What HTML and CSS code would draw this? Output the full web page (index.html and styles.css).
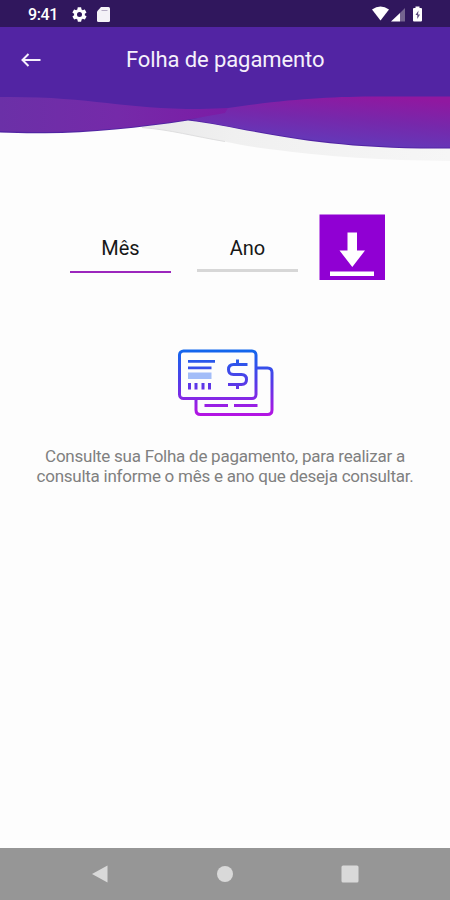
FILE: index.html
```html
<!DOCTYPE html>
<html lang="pt-BR">
<head>
<meta charset="utf-8">
<title>Folha de pagamento</title>
<link rel="stylesheet" href="styles.css">
</head>
<body>
<div class="screen">
  <div class="status">
    <span class="time">9:41</span>
    <svg class="gear" viewBox="1.500 1.500 21 21"><path fill="#fff" d="M19.400 13c0-.3.1-.6.1-1s0-.7-.1-1l2.100-1.600c.2-.2.3-.4.1-.7l-2-3.400c-.1-.2-.4-.3-.6-.2l-2.500 1c-.5-.4-1.100-.7-1.700-1L14.400 2.400c0-.2-.2-.4-.5-.4h-4c-.2 0-.4.200-.5.400L9 5.100c-.6.200-1.200.600-1.700 1l-2.500-1c-.2-.1-.5 0-.6.200l-2 3.400c-.1.200-.1.500.1.700L4.500 11c0 .3-.1.700-.1 1s0 .7.100 1l-2.100 1.600c-.2.200-.3.400-.1.700l2 3.400c.1.200.4.300.6.200l2.500-1c.5.400 1.100.7 1.700 1l.4 2.700c0 .2.200.4.5.4h4c.2 0 .4-.2.500-.4l.4-2.700c.6-.2 1.200-.6 1.700-1l2.500 1c.2.100.5 0 .6-.2l2-3.400c.1-.2.100-.5-.1-.7zM12 15.500a3.500 3.500 0 1 1 0-7 3.500 3.500 0 0 1 0 7z"/></svg>
    <svg class="card-icon" viewBox="0 0 13 15"><path fill="#f4f2f7" d="M4 0h7.500Q13 0 13 1.500v12Q13 15 11.500 15h-10Q0 15 0 13.500V4.500z"/><path stroke="#b5acc4" d="M4.500 3.500h6"/></svg>
    <svg class="signals" viewBox="0 0 52 16">
      <path fill="#fff" d="M0 3.500Q8.500-2.500 17 3.500L8.500 14.500z"/>
      <path fill="#fff" d="M19 15.500 28 7v8.500z"/><path fill="#75648f" d="m28 7 5-5v13.500h-5z"/>
      <path fill="#fff" d="M43.500 2V.5h4V2H49q1 0 1 1v11.500q0 1-1 1h-7q-1 0-1-1V3q0-1 1-1z"/><path fill="#5b4a7c" d="m46.500 4.500-3 4.500h1.800v4L48 8.500h-2z"/>
    </svg>
  </div>
  <header class="header">
    <svg class="back" viewBox="0 0 20 14"><path d="M19.500 7H1.500M7.500 1 1.500 7l6 6"/></svg>
    <h1>Folha de pagamento</h1>
  </header>
  <svg class="waves" viewBox="0 90 450 76">
    <defs>
      <linearGradient id="left" x1="0" y1="0" x2="1" y2="0"><stop stop-color="#6b30a7"/><stop offset=".5" stop-color="#752aa9"/><stop offset="1" stop-color="#7c1ba5"/></linearGradient>
      <linearGradient id="right" gradientUnits="userSpaceOnUse" x1="375" y1="96" x2="371" y2="147"><stop stop-color="#9018a0"/><stop offset=".5" stop-color="#7628ab"/><stop offset="1" stop-color="#6339b9"/></linearGradient>
      <linearGradient id="shade" x1="0" y1="0" x2="1" y2="0"><stop stop-color="#e8e8e9"/><stop offset=".3" stop-color="#f0f0f0"/><stop offset="1" stop-color="#f6f6f6"/></linearGradient>
    </defs>
    <path fill="url(#shade)" d="M140 127 188 118 450 146V161Q350 160 277 150C250 147 236 144 225 141.500C192 136 172 130 140 127"/>
    <path fill="none" stroke="#dededf" d="M142 127.500C172 130 192 136 225 141.500"/>
    <path fill="#5224a3" d="M0 90H450V148.500C310 150 250 128 188 120.500C140 128 90 133 45 133.300Q20 133.500 0 132.500z"/>
    <path fill="url(#left)" d="M0 97C90 96 120 109 200 109L230 108 235 113 188 119.500C140 127 90 132 45 132Q20 132 0 131z"/>
    <path fill="url(#right)" d="M228 108C290 99 330 96.500 380 96.500H450V147.500C320 149 260 130 190 119.700C202 117 214 115 225 113z"/>
  </svg>
  <main>
    <div class="form">
      <div class="field active">Mês</div>
      <div class="field">Ano</div>
      <svg class="download" viewBox="0 0 66 66"><path fill="#9000d3" d="M.5.5H66V66H.5z"/><path fill="#fff" d="M28.500 18.500H38v18h8L33.300 53 20.500 36.500h8zM11 57.500h44V62H11z"/></svg>
    </div>
    <svg class="checks" viewBox="0 0 97 68">
      <defs><linearGradient id="ink" gradientUnits="userSpaceOnUse" x1="0" y1="1" x2="0" y2="66"><stop stop-color="#1267ed"/><stop offset=".5" stop-color="#553be8"/><stop offset="1" stop-color="#b414e3"/></linearGradient></defs>
      <g fill="none" stroke="url(#ink)" stroke-width="3">
        <rect x="2.500" y="2" width="76.500" height="47.500" rx="4"/>
        <path d="M79 19h11.500q4.500 0 4.500 4.500v37.500q0 4.500-4.500 4.500H23.500q-4.500 0-4.500-4.500V50"/>
        <path fill="url(#ink)" stroke="none" d="M11 11h27v2.800H11zM11 17.500h23.500v2.800H11zM11 34h3v6.500h-3zM17.500 34h3v6.500h-3zM24.500 34h3v6.500h-3zM31 34h3v6.500h-3zM27.500 55H51v3H27.500zM57 55h23.500v3H57z"/>
        <path d="M70.500 15.500H56.500q-5 0-5 5t5 5h8q5 0 5 5t-5 5H51M60.500 10.500v5M60.500 35.500v4.500"/>
      </g>
      <path fill="#a3bdf8" d="M11 23.500h23.500v6.500H11z"/>
    </svg>
    <p>Consulte sua Folha de pagamento, para realizar a<br>consulta informe o mês e ano que deseja consultar.</p>
  </main>
  <nav class="nav">
    <svg viewBox="0 0 18 18"><path d="M1 9 16.500.5v17z"/></svg>
    <svg viewBox="0 0 18 18"><circle cx="9" cy="9" r="8"/></svg>
    <svg viewBox="0 0 18 18"><rect x=".5" y=".5" width="17" height="17" rx="1.500"/></svg>
  </nav>
</div>
</body>
</html>
```
FILE: styles.css
```css
* { box-sizing: border-box; }
body { margin: 0; font-family: Roboto, sans-serif; }
svg { display: block; flex: none; }
.screen { width: 450px; height: 900px; display: flex; flex-direction: column; background: #fdfdfd; }
.status { height: 27px; display: flex; align-items: center; padding: 1px 26px 0 28px; background: #30175d; color: #fff; }
.time { width: 44px; font-size: 16px; font-weight: 500; letter-spacing: -.4px; }
.gear { width: 15px; height: 15px; }
.card-icon { width: 13px; height: 15px; margin-left: 10px; }
.signals { width: 52px; height: 16px; margin-left: auto; }
.header { height: 63px; display: flex; padding: 0 21px; background: #5224a3; color: #f5f0fb; }
.back { width: 20px; height: 14px; margin-top: 26px; fill: none; stroke: #f5f0fb; stroke-width: 2; }
h1 { margin: 20px 0 0 85px; font-size: 22px; line-height: 26px; font-weight: 400; letter-spacing: -.1px; white-space: nowrap; }
.waves { width: 450px; height: 76px; }
main { flex: 1; display: flex; flex-direction: column; align-items: center; }
.form { width: 450px; height: 66px; display: flex; margin-top: 48px; padding-left: 70px; }
.field { width: 101px; height: 59px; margin-right: 26px; padding-top: 21px; border-bottom: 2px solid #9c27bd; color: #171717; font-size: 20px; line-height: 26px; text-align: center; }
.field:nth-child(2) { height: 58px; margin-right: 22px; border-bottom: 3px solid #d7d7d7; }
.download { width: 66px; height: 66px; margin-left: -1px; }
.checks { width: 97px; height: 68px; margin-top: 69px; }
p { margin: 29px 0 0; color: #808080; font-size: 17px; line-height: 20px; letter-spacing: -.25px; text-align: center; white-space: nowrap; }
.nav { height: 52px; display: flex; align-items: center; justify-content: space-between; padding: 0 91px; background: #969696; }
.nav svg { width: 18px; height: 18px; fill: #d9d9d9; }
```
